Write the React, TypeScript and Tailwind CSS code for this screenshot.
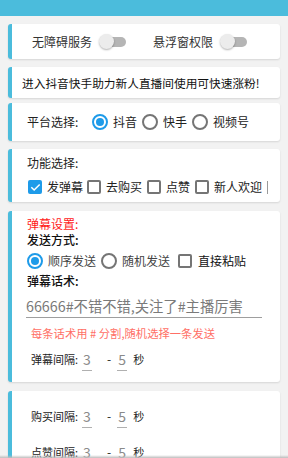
import React from 'react';

const card = 'mx-2 bg-white rounded-[3px] border-l-4 border-[#4bbcdc] shadow-[0_1px_2px_rgba(0,0,0,0.12)]';

function Toggle() {
  return (
    <div className="relative w-[27px] h-[15px] shrink-0">
      <div className="absolute left-[3px] top-[3px] w-[24px] h-[10px] rounded-full bg-[#b5b5b5]" />
      <div className="absolute left-0 top-0 w-[15px] h-[15px] rounded-full bg-[#ececec] shadow-[0_1px_2px_rgba(0,0,0,0.3)]" />
    </div>
  );
}

function Radio({ on }: { on?: boolean }) {
  return (
    <div
      className={`w-[16px] h-[16px] rounded-full border-2 flex items-center justify-center shrink-0 ${
        on ? 'border-[#1e9be9]' : 'border-[#757575]'
      }`}
    >
      {on && <div className="w-[8px] h-[8px] rounded-full bg-[#1e9be9]" />}
    </div>
  );
}

function Check({ on }: { on?: boolean }) {
  if (on) {
    return (
      <div className="w-[14px] h-[14px] rounded-[2px] bg-[#1e9be9] flex items-center justify-center shrink-0">
        <svg width="11" height="11" viewBox="0 0 24 24" fill="none" stroke="white" strokeWidth="3.2" strokeLinecap="square">
          <path d="M4 12.5l5 5L20 6.5" />
        </svg>
      </div>
    );
  }
  return <div className="w-[14px] h-[14px] rounded-[2px] border-2 border-[#757575] shrink-0" />;
}

function Interval({ label }: { label: string }) {
  return (
    <div className="flex items-start h-[20px] pl-[19px] text-[11px] leading-[16px] text-[#222] whitespace-nowrap">
      <span className="w-[51px]">{label}</span>
      <div className="flex flex-col items-center w-[10px]">
        <span className="text-[14px] leading-[16px] text-[#8a8a8a]">3</span>
        <div className="w-[10px] h-px bg-[#b0b0b0] mt-[3px]" />
      </div>
      <span className="ml-[15px] text-[12px]">-</span>
      <div className="ml-[6px] flex flex-col items-center w-[10px]">
        <span className="text-[14px] leading-[16px] text-[#8a8a8a]">5</span>
        <div className="w-[10px] h-px bg-[#b0b0b0] mt-[3px]" />
      </div>
      <span className="ml-[6px]">秒</span>
    </div>
  );
}

export default function App() {
  return (
    <div className="relative w-[288px] h-[458px] overflow-hidden bg-[#f2f2f2] font-['Noto_Sans_CJK_SC','Noto_Sans',sans-serif]">
      <div className="h-[16px] bg-[#4bbcdc]" />

      <div className={`${card} mt-[8px] h-[35px] flex items-center pl-[20px] text-[12px] text-[#333] whitespace-nowrap`}>
        <span className="w-[60px]">无障碍服务</span>
        <div className="ml-[7px]"><Toggle /></div>
        <span className="ml-[27px] w-[60px]">悬浮窗权限</span>
        <div className="ml-[7px]"><Toggle /></div>
      </div>

      <div className={`${card} mt-[8px] h-[31px] flex items-center pl-[10px] text-[11.7px] text-[#111] whitespace-nowrap`}>
        进入抖音快手助力新人直播间使用可快速涨粉!
      </div>

      <div className={`${card} mt-[5px] h-[38px] flex items-center pl-[15px] text-[12px] text-[#222] whitespace-nowrap`}>
        <span className="w-[51px]">平台选择:</span>
        <div className="ml-[14px]"><Radio on /></div>
        <span className="ml-[5px]">抖音</span>
        <div className="ml-[5px]"><Radio /></div>
        <span className="ml-[5px]">快手</span>
        <div className="ml-[5px]"><Radio /></div>
        <span className="ml-[5px]">视频号</span>
      </div>

      <div className={`${card} mt-[8px] h-[53px] pl-[15px] pt-[5px] text-[12px] text-[#222] whitespace-nowrap`}>
        <div className="h-[17px] leading-[17px]">功能选择:</div>
        <div className="mt-[5px] h-[22px] flex items-center pl-px">
          <Check on />
          <span className="ml-[5px]">发弹幕</span>
          <div className="ml-[4px]"><Check /></div>
          <span className="ml-[5px]">去购买</span>
          <div className="ml-[5px]"><Check /></div>
          <span className="ml-[5px]">点赞</span>
          <div className="ml-[5px]"><Check /></div>
          <span className="ml-[5px]">新人欢迎</span>
          <div className="ml-[5px] w-px h-[13px] bg-[#9a9a9a]" />
        </div>
      </div>

      <div className={`${card} mt-[9px] h-[171px] pl-[15px] pt-[5px] whitespace-nowrap`}>
        <div className="h-[16px] leading-[16px] text-[12px] text-[#ff1a1a]">弹幕设置:</div>
        <div className="h-[16px] leading-[16px] text-[12px] text-[#111] font-medium">发送方式:</div>
        <div className="mt-[1px] h-[24px] flex items-center text-[12px]">
          <Radio on />
          <span className="ml-[5px] text-[#444]">顺序发送</span>
          <div className="ml-[5px]"><Radio /></div>
          <span className="ml-[5px] text-[#444]">随机发送</span>
          <div className="ml-[8px]"><Check /></div>
          <span className="ml-[6px] text-[#111]">直接粘贴</span>
        </div>
        <div className="h-[16px] leading-[16px] text-[12px] text-[#111] font-medium">弹幕话术:</div>
        <div className="mt-[7px] w-[236px] -ml-px">
          <div className="h-[20px] leading-[20px] text-[14.3px] text-[#7a7a7a]">66666#不错不错,关注了#主播厉害</div>
          <div className="mt-px h-px bg-[#9e9e9e]" />
        </div>
        <div className="mt-[7px] pl-[4px] h-[16px] leading-[16px] text-[11.3px] text-[#ff6f66]">每条话术用 # 分割,随机选择一条发送</div>
        <div className="mt-[10px] -ml-[15px]">
          <Interval label="弹幕间隔:" />
        </div>
      </div>

      <div className={`${card} mt-[9px] h-[90px] pt-[17px]`}>
        <Interval label="购买间隔:" />
        <div className="mt-[16px]">
          <Interval label="点赞间隔:" />
        </div>
      </div>

      <div className="absolute left-0 right-0 bottom-0 h-[3px] bg-gradient-to-b from-transparent to-[#bdbdbd]" />
    </div>
  );
}
